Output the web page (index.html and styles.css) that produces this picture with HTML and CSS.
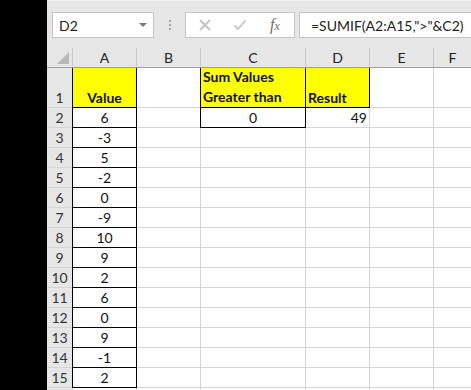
FILE: index.html
```html
<!DOCTYPE html>
<html lang="en">
<head>
  <meta charset="UTF-8" />
  <title>SUMIF greater than</title>
  <link rel="stylesheet" href="styles.css">
</head>
<body>

  <div class="screen">
    <div class="side-band"></div>

    <div class="excel">
      <div class="toolbar">
        <div class="name-box">
          <span>D2</span>
          <span class="caret"></span>
        </div>
        <div class="grip"><i></i><i></i><i></i></div>
        <div class="fx-box">
          <svg class="icon" width="14" height="14" viewBox="0 0 14 14">
            <path d="M2 2 L12 12 M12 2 L2 12" stroke="#c4c4c4" stroke-width="2" fill="none" />
          </svg>
          <svg class="icon" width="14" height="14" viewBox="0 0 14 14">
            <path d="M1.5 7.5 L5 11 L12.5 2.5" stroke="#c4c4c4" stroke-width="1.8" fill="none" />
          </svg>
          <span class="fx">f<small>x</small></span>
        </div>
        <div class="formula">=SUMIF(A2:A15,"&gt;"&amp;C2)</div>
      </div>

      <div class="col-heads">
        <div class="corner"><span class="tri"></span></div>
        <div>A</div>
        <div>B</div>
        <div>C</div>
        <div>D</div>
        <div>E</div>
        <div>F</div>
      </div>

      <div class="sheet" id="sheet">
        <div class="rh bottom">1</div>
        <div class="cell hl box center bottom bold">Value</div>
        <div class="cell"></div>
        <div class="cell hl box bottom bold wrap">Sum Values Greater than</div>
        <div class="cell hl box bottom bold">Result</div>
        <div class="cell"></div>
        <div class="cell"></div>

        <div class="rh">2</div>
        <div class="cell box center">6</div>
        <div class="cell"></div>
        <div class="cell box center">0</div>
        <div class="cell right">49</div>
        <div class="cell"></div>
        <div class="cell"></div>
      </div>
    </div>
  </div>

  <script>
    const values = [-3, 5, -2, 0, -9, 10, 9, 2, 6, 0, 9, -1, 2];
    const sheet = document.getElementById('sheet');

    function addRow(num, val) {
      let html = `<div class="rh">${num}</div>`;
      if (val === null) {
        html += '<div class="cell"></div>';
      } else {
        html += `<div class="cell box center">${val}</div>`;
      }
      for (let i = 0; i < 5; i++) {
        html += '<div class="cell"></div>';
      }
      sheet.insertAdjacentHTML('beforeend', html);
    }

    values.forEach((v, i) => addRow(i + 3, v));
    // row 16 only peeks in at the bottom edge, its label is out of view
    addRow('', null);
  </script>
</body>
</html>
```

FILE: styles.css
```css
body {
  margin: 0;
  padding: 0;
  font-family: Lato, 'Open Sans', sans-serif;
  color: #111;
  overflow: hidden;
}

.screen {
  display: flex;
  width: 471px;
  height: 390px;
}

.side-band {
  width: 47px;
  background: #000;
  flex-shrink: 0;
}

.excel {
  flex: 1;
  display: flex;
  flex-direction: column;
  background: #e6e6e6;
  min-width: 0;
}

/* formula bar */
.toolbar {
  height: 48px;
  box-sizing: border-box;
  padding: 11px 0 0 5px;
  display: flex;
  align-items: flex-start;
  border-top: 1px solid #efefef;
}

.name-box,
.fx-box,
.formula {
  height: 26px;
  box-sizing: border-box;
  background: #fff;
  border: 1px solid #c6c6c6;
  display: flex;
  align-items: center;
}

.name-box {
  width: 102px;
  padding: 0 6px 0 6px;
  justify-content: space-between;
  font-size: 14px;
  color: #222;
}

.caret {
  width: 0;
  height: 0;
  border-left: 4px solid transparent;
  border-right: 4px solid transparent;
  border-top: 4px solid #777;
}

.grip {
  width: 31px;
  display: flex;
  flex-direction: column;
  align-items: center;
  gap: 2px;
  padding-top: 8px;
}

.grip i {
  width: 2px;
  height: 2px;
  background: #a6a6a6;
}

.fx-box {
  width: 110px;
  padding-left: 12px;
  gap: 21px;
}

.fx {
  font-family: 'Liberation Serif', serif;
  font-style: italic;
  font-size: 16px;
  color: #6b6b6b;
  margin-left: 2px;
}

.fx small {
  font-size: 12px;
}

.formula {
  flex: 1;
  margin-left: 4px;
  padding-left: 11px;
  border-right: none;
  font-size: 14px;
  color: #222;
  white-space: nowrap;
  overflow: hidden;
}

/* column headings */
.col-heads {
  display: grid;
  grid-template-columns: 25px 63px 63px 104px 63px 63px 1fr;
  column-gap: 1px;
  background: #c8c8c8;
  height: 20px;
  box-sizing: border-box;
  border-bottom: 1px solid #9e9e9e;
}

.col-heads div {
  background: #e6e6e6;
  display: flex;
  align-items: center;
  justify-content: center;
  font-size: 14px;
  color: #222;
}

.col-heads .corner {
  align-items: flex-end;
  justify-content: flex-end;
  padding: 0 3px 3px 0;
}

.tri {
  width: 0;
  height: 0;
  border-left: 12px solid transparent;
  border-bottom: 12px solid #b8b8b8;
}

/* grid */
.sheet {
  flex: 1;
  display: grid;
  grid-template-columns: 25px 63px 63px 104px 63px 63px 1fr;
  grid-template-rows: 39px;
  grid-auto-rows: 19px;
  gap: 1px;
  background: #d4d4d4;
  overflow: hidden;
  font-size: 14px;
  line-height: 19px;
}

.rh {
  background: #e6e6e6;
  color: #333;
  font-size: 14px;
  display: flex;
  align-items: center;
  justify-content: center;
}

.cell {
  background: #fff;
  display: flex;
  align-items: center;
  padding: 0 2px;
  white-space: nowrap;
}

.center {
  justify-content: center;
}

.right {
  justify-content: flex-end;
}

.bottom {
  align-items: flex-end;
}

.bold {
  font-weight: bold;
}

.wrap {
  white-space: normal;
  line-height: 20px;
}

.hl {
  background: #ffff00;
}

.box {
  outline: 1px solid #000;
}
```
